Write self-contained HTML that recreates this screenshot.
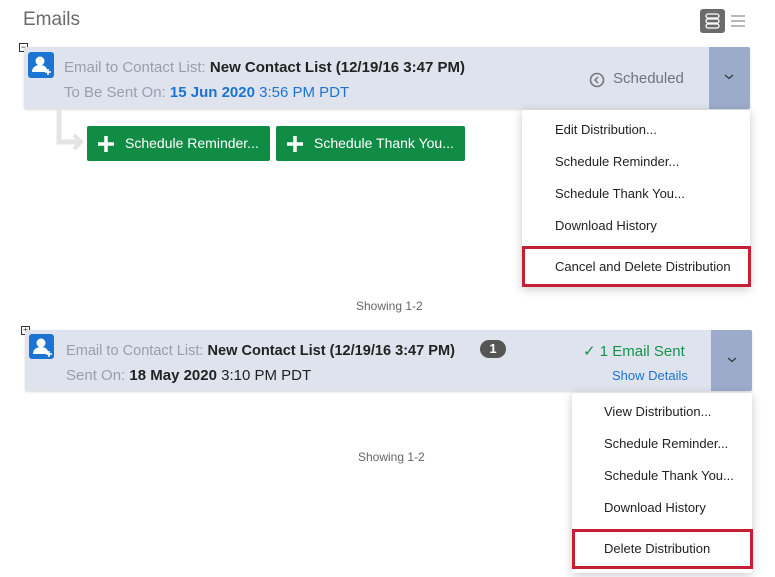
<!DOCTYPE html>
<html><head><meta charset="utf-8"><style>
*{margin:0;padding:0;box-sizing:border-box}
body{width:775px;height:577px;background:#fff;font-family:"Liberation Sans",sans-serif;position:relative;overflow:hidden;color:#222}
.a{position:absolute;white-space:nowrap}
.row{position:absolute;background:#dfe3ee;border-radius:2px;box-shadow:0 1px 2px rgba(0,0,0,.15)}
.dd{position:absolute;background:#9dabcb;border-radius:0 2px 2px 0}
.av{position:absolute;width:26px;height:26px;background:#1b74d1;border-radius:3px}
.g{color:#9a9ea6}
.menu{position:absolute;background:#fff;box-shadow:0 2px 10px rgba(0,0,0,.22);border-radius:2px}
.mi{position:absolute;font-size:13px;color:#222}
.red{position:absolute;border:3px solid #c41f35}
.btn{position:absolute;background:#108c45;color:#fff;font-size:14px;border-radius:2px;height:35px;line-height:35px}
.sq{position:absolute;width:9px;height:9px;border:1px solid #333;font-size:9px;line-height:7px;text-align:center}
</style></head><body>
<div class="a" style="left:23px;top:9px;font-size:19px;color:#6b6b6b">Emails</div>
<div class="a" style="left:700px;top:9px;width:25px;height:24px;background:#6b6b6b;border-radius:3px"></div>
<svg class="a" style="left:700px;top:9px" width="50" height="24"><g fill="none" stroke="#fff" stroke-width="1.3"><rect x="6" y="5" width="13" height="4" rx="2"/><rect x="6" y="10" width="13" height="4" rx="2"/><rect x="6" y="15" width="13" height="4" rx="2"/></g><g stroke="#888" stroke-width="1.2"><line x1="31" y1="7" x2="45" y2="7"/><line x1="31" y1="12" x2="45" y2="12"/><line x1="31" y1="17" x2="45" y2="17"/></g></svg>

<div class="sq" style="left:19px;top:43px">−</div>
<div class="row" style="left:24px;top:47px;width:726px;height:62px"></div>
<div class="dd" style="left:709px;top:47px;width:41px;height:62px"></div>
<svg class="a" style="left:724px;top:74px" width="10" height="6"><path d="M1 1l4 3.5L9 1" fill="none" stroke="#333" stroke-width="1.2"/></svg>
<div class="av" style="left:28px;top:52px"></div>
<svg class="a" style="left:28px;top:52px" width="26" height="26"><circle cx="12" cy="9" r="4.5" fill="#fff"/><path d="M4 20c0-5 4-7 8-7s7 2 7 5v2z" fill="#fff"/><path d="M20 17v6M17 20h6" stroke="#fff" stroke-width="1.6"/></svg>
<div class="a" style="left:64px;top:59px;font-size:15px"><span class="g">Email to Contact List: </span><b>New Contact List (12/19/16 3:47 PM)</b></div>
<div class="a" style="left:64px;top:84px;font-size:15px;color:#1b74d1"><span class="g">To Be Sent On: </span><b>15 Jun 2020</b> 3:56 PM PDT</div>
<svg class="a" style="left:588px;top:71px" width="18" height="18"><circle cx="9" cy="9" r="6.5" fill="none" stroke="#777" stroke-width="1.6"/><path d="M10 6l-3 3 3 3" fill="none" stroke="#777" stroke-width="1.5"/></svg>
<div class="a" style="left:613px;top:70px;font-size:15px;color:#6f737a">Scheduled</div>

<svg class="a" style="left:52px;top:109px" width="35" height="45"><path d="M7 0v33h20" fill="none" stroke="#e4e4e4" stroke-width="5"/><path d="M22 26l7 7-7 7" fill="none" stroke="#e4e4e4" stroke-width="4"/></svg>
<div class="btn" style="left:87px;top:126px;width:183px;padding-left:38px">Schedule Reminder...</div>
<svg class="a" style="left:97px;top:135px" width="18" height="18"><path d="M9 1v16M1 9h16" stroke="#fff" stroke-width="3.5"/></svg>
<div class="btn" style="left:276px;top:126px;width:189px;padding-left:38px">Schedule Thank You...</div>
<svg class="a" style="left:286px;top:135px" width="18" height="18"><path d="M9 1v16M1 9h16" stroke="#fff" stroke-width="3.5"/></svg>

<div class="menu" style="left:522px;top:110px;width:228px;height:177px"></div>
<div class="mi" style="left:555px;top:122px">Edit Distribution...</div>
<div class="mi" style="left:555px;top:154px">Schedule Reminder...</div>
<div class="mi" style="left:555px;top:186px">Schedule Thank You...</div>
<div class="mi" style="left:555px;top:218px">Download History</div>
<div class="red" style="left:522px;top:246px;width:229px;height:41px"></div>
<div class="mi" style="left:555px;top:259px">Cancel and Delete Distribution</div>
<div class="a" style="left:356px;top:299px;font-size:12px;color:#666">Showing 1-2</div>

<div class="sq" style="left:21px;top:326px">+</div>
<div class="row" style="left:25px;top:330px;width:727px;height:61px"></div>
<div class="dd" style="left:711px;top:330px;width:41px;height:61px"></div>
<svg class="a" style="left:727px;top:357px" width="10" height="6"><path d="M1 1l4 3.5L9 1" fill="none" stroke="#333" stroke-width="1.2"/></svg>
<div class="av" style="left:29px;top:334px;width:25px;height:25px"></div>
<svg class="a" style="left:29px;top:334px" width="26" height="26"><circle cx="12" cy="9" r="4.5" fill="#fff"/><path d="M4 20c0-5 4-7 8-7s7 2 7 5v2z" fill="#fff"/><path d="M20 17v6M17 20h6" stroke="#fff" stroke-width="1.6"/></svg>
<div class="a" style="left:66px;top:342px;font-size:15px;transform:scaleX(.97);transform-origin:left"><span class="g">Email to Contact List: </span><b>New Contact List (12/19/16 3:47 PM)</b></div>
<div class="a" style="left:480px;top:340px;width:26px;height:18px;border-radius:9px;background:#555;color:#fff;font-size:13px;font-weight:bold;text-align:center;line-height:18px">1</div>
<div class="a" style="left:66px;top:367px;font-size:15px"><span class="g">Sent On: </span><b>18 May 2020</b> 3:10 PM PDT</div>
<div class="a" style="left:583px;top:342px;font-size:15px;color:#14924a">✓ 1 Email Sent</div>
<div class="a" style="left:612px;top:368px;font-size:13px;color:#1b74d1">Show Details</div>

<div class="menu" style="left:572px;top:393px;width:180px;height:180px"></div>
<div class="mi" style="left:604px;top:404px">View Distribution...</div>
<div class="mi" style="left:604px;top:436px">Schedule Reminder...</div>
<div class="mi" style="left:604px;top:468px">Schedule Thank You...</div>
<div class="mi" style="left:604px;top:500px">Download History</div>
<div class="red" style="left:572px;top:529px;width:181px;height:40px"></div>
<div class="mi" style="left:604px;top:541px">Delete Distribution</div>
<div class="a" style="left:358px;top:450px;font-size:12px;color:#666">Showing 1-2</div>
</body></html>
